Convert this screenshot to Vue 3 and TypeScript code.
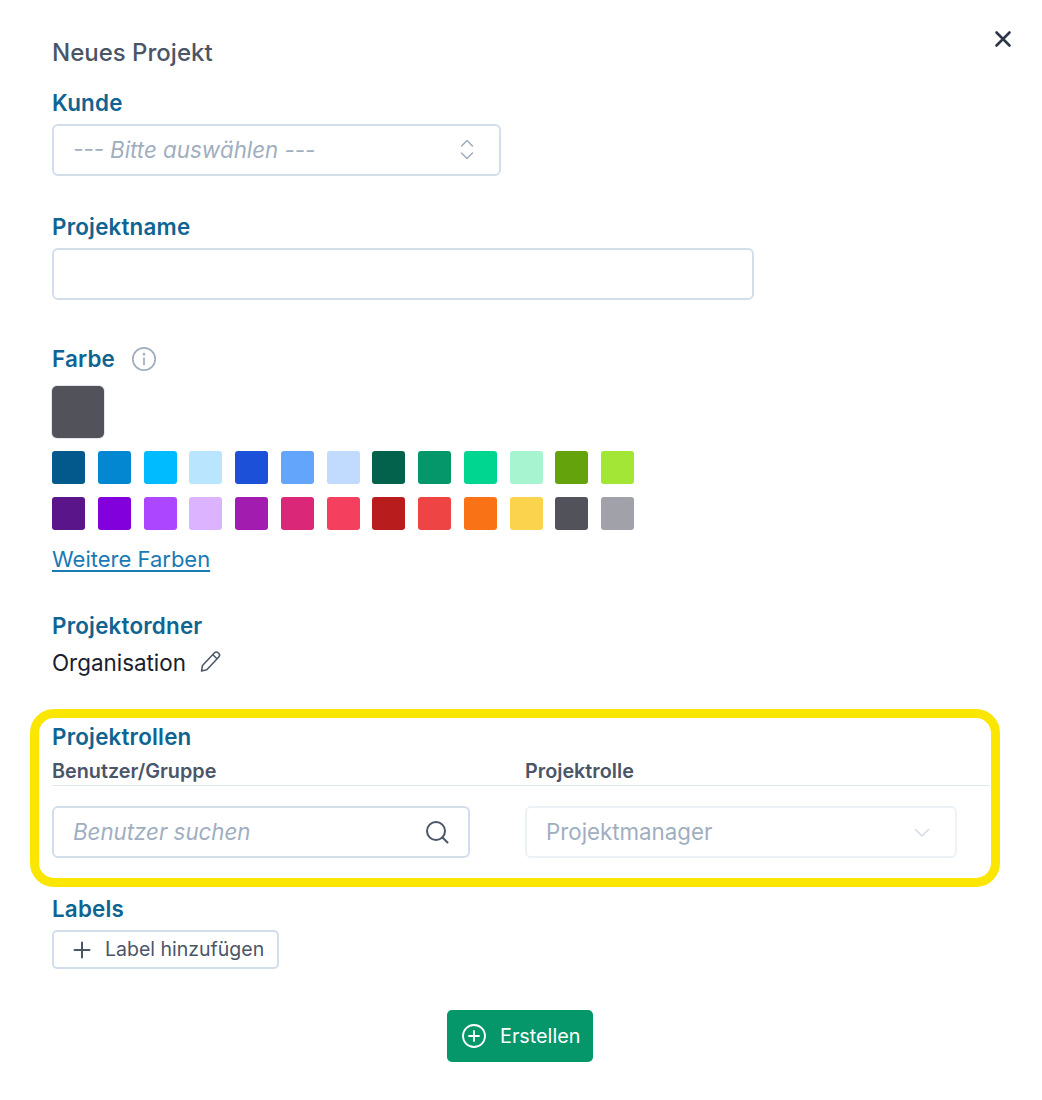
<script setup lang="ts">
const colorRows: string[][] = [
  ['#03598c', '#0387d0', '#00bbff', '#b9e6fe', '#1c50d8', '#62a5fa', '#c0dbfe', '#03624c', '#059669', '#00d690', '#a6f4d0', '#65a30d', '#a3e635'],
  ['#591589', '#8200db', '#ad46ff', '#dcb3ff', '#a21caf', '#db2777', '#f43f5e', '#b91c1c', '#ef4444', '#f97316', '#fcd34d', '#52525b', '#a1a1aa'],
];
</script>

<template>
  <div class="dialog">
    <button class="close" aria-label="Schließen">
      <svg width="18" height="18" viewBox="0 0 18 18" fill="none" stroke="#2d3748" stroke-width="2.6" stroke-linecap="round">
        <path d="M2.500 2.500l13 13M15.500 2.500l-13 13" />
      </svg>
    </button>

    <h1 class="title">Neues Projekt</h1>

    <section class="field kunde">
      <label class="label">Kunde</label>
      <div class="control select">
        <span class="placeholder">--- Bitte auswählen ---</span>
        <svg class="updown" width="14" height="24" viewBox="0 0 14 24" fill="none" stroke="#a0aec0" stroke-width="1.6" stroke-linecap="round" stroke-linejoin="round">
          <path d="M1.500 8L7 2.500 12.500 8M1.500 15L7 20.500 12.500 15" />
        </svg>
      </div>
    </section>

    <section class="field name">
      <label class="label">Projektname</label>
      <div class="control wide"></div>
    </section>

    <section class="field farbe">
      <div class="label-row">
        <label class="label">Farbe</label>
        <svg width="26" height="26" viewBox="0 0 26 26" fill="none" stroke="#a0aec0" stroke-width="1.700">
          <circle cx="13" cy="13" r="11.200" />
          <path d="M13 12v6.500" stroke-linecap="round" />
          <circle cx="13" cy="8.200" r=".6" />
        </svg>
      </div>
      <div class="current"></div>
      <div class="row" v-for="(row, i) in colorRows" :key="i">
        <span v-for="c in row" :key="c" class="swatch" :style="{ background: c }"></span>
      </div>
      <a class="more" href="#">Weitere Farben</a>
    </section>

    <section class="field ordner">
      <label class="label">Projektordner</label>
      <div class="folder">
        <span>Organisation</span>
        <svg width="24" height="24" viewBox="0 0 24 24" fill="none" stroke="#4a5568" stroke-width="1.500" stroke-linejoin="round">
          <path d="M3.500 21l1-5.500L16.500 2.800c1-1 2.500-1 3.500-.1l.8.8c1 1 1 2.400 0 3.400L8.800 19.800z" />
          <path d="M14.800 4.700l4.500 4.300" />
        </svg>
      </div>
    </section>

    <section class="field rollen">
      <label class="label">Projektrollen</label>
      <div class="cols heads">
        <span class="head">Benutzer/Gruppe</span>
        <span class="head">Projektrolle</span>
      </div>
      <div class="cols inputs">
        <div class="control search">
          <span class="placeholder">Benutzer suchen</span>
          <svg width="26" height="26" viewBox="0 0 26 26" fill="none" stroke="#4a5568" stroke-width="2" stroke-linecap="round">
            <circle cx="12" cy="12" r="9" />
            <path d="M18.500 18.500l5 5" />
          </svg>
        </div>
        <div class="control role">
          <span>Projektmanager</span>
          <svg width="18" height="12" viewBox="0 0 18 12" fill="none" stroke="#d5dce6" stroke-width="1.600" stroke-linecap="round" stroke-linejoin="round">
            <path d="M2.500 3.500L9 10l6.500-6.500" />
          </svg>
        </div>
      </div>
      <div class="highlight"></div>
    </section>

    <section class="field labels">
      <label class="label">Labels</label>
      <button class="add">
        <svg width="20" height="20" viewBox="0 0 20 20" fill="none" stroke="#4a5568" stroke-width="2" stroke-linecap="round">
          <path d="M10 2.500v15M2.500 10h15" />
        </svg>
        <span>Label hinzufügen</span>
      </button>
    </section>

    <div class="actions">
      <button class="create">
        <svg width="26" height="26" viewBox="0 0 26 26" fill="none" stroke="#fff" stroke-width="1.800" stroke-linecap="round">
          <circle cx="13" cy="13" r="11" />
          <path d="M13 8v10M8 13h10" />
        </svg>
        <span>Erstellen</span>
      </button>
    </div>
  </div>
</template>

<style>
html, body { background: #fff; }
</style>

<style scoped>
.dialog {
  position: relative;
  box-sizing: border-box;
  width: 1042px;
  height: 1100px;
  padding: 38px 52px 0;
  background: #fff;
  font-family: Inter, "Noto Sans", sans-serif;
  color: #1a202c;
}
.close {
  position: absolute;
  top: 30px;
  right: 30px;
  padding: 0;
  border: 0;
  background: none;
  line-height: 0;
}
.title {
  margin: 0 0 22px;
  font-size: 24px;
  line-height: 30px;
  font-weight: 500;
  color: #4a5568;
}
.label {
  display: block;
  font-size: 22.4px;
  line-height: 26px;
  font-weight: 600;
  letter-spacing: 0.2px;
  color: #0f6491;
}
.control {
  box-sizing: border-box;
  display: flex;
  align-items: center;
  justify-content: space-between;
  height: 52px;
  padding: 0 19px;
  border: 2px solid #d3deeb;
  border-radius: 6px;
  background: #fff;
  font-size: 22.3px;
}
.control span { margin-top: -2px; }
.placeholder {
  font-style: italic;
  color: #a0aec0;
}
.kunde .label { margin-bottom: 8px; }
.select { width: 449px; padding-right: 25px; }
.name { margin-top: 38px; }
.name .label { margin-bottom: 8px; }
.wide { width: 702px; }
.farbe { margin-top: 46px; }
.label-row {
  display: flex;
  align-items: center;
  gap: 16px;
  height: 26px;
}
.current {
  width: 52px;
  height: 52px;
  margin: 14px 0 13px;
  border-radius: 5px;
  background: #52525b;
  box-shadow: 0 0 0 1px #e2e8f0;
}
.row {
  display: flex;
  gap: 12.75px;
  margin-bottom: 13px;
}
.swatch {
  width: 33px;
  height: 33px;
  border-radius: 3px;
}
.more {
  display: inline-block;
  margin-top: 3px;
  font-size: 22px;
  line-height: 26px;
  color: #1a7ab5;
  text-decoration: underline;
  text-underline-offset: 3px;
}
.ordner { margin-top: 41px; }
.folder {
  display: flex;
  align-items: center;
  gap: 12px;
  margin-top: 10px;
  height: 26px;
  font-size: 22.4px;
  color: #1a202c;
}
.rollen {
  position: relative;
  margin-top: 49px;
  margin-right: -52px;
}
.cols {
  display: flex;
  width: 938px;
}
.heads {
  align-items: center;
  height: 23px;
  margin-top: 9px;
  padding-bottom: 3px;
  border-bottom: 1px solid #e2e8f0;
}
.head {
  font-size: 19.800px;
  font-weight: 600;
  color: #4a5568;
}
.head:first-child { width: 473px; }
.inputs {
  gap: 55px;
  margin-top: 20px;
}
.search {
  width: 418px;
  padding-right: 18px;
}
.role {
  width: 432px;
  padding-right: 24px;
  border-color: #edf2f7;
  color: #a0aec0;
}
.highlight {
  position: absolute;
  left: -22px;
  right: 42px;
  top: -15px;
  height: 178px;
  box-sizing: border-box;
  border: 9px solid #fae600;
  border-radius: 24px;
  pointer-events: none;
}
.labels { margin-top: 38px; }
.labels .label { margin-bottom: 8px; }
.add {
  box-sizing: border-box;
  display: flex;
  align-items: center;
  gap: 13px;
  width: 227px;
  height: 39px;
  padding: 0 12px 0 18px;
  border: 2px solid #d3deeb;
  border-radius: 5px;
  background: #fff;
  font-family: inherit;
  font-size: 19.500px;
  color: #4a5568;
  white-space: nowrap;
}
.add span { margin-top: -2px; }
.actions {
  display: flex;
  justify-content: center;
  margin-top: 41px;
  margin-right: 2px;
}
.create {
  display: flex;
  align-items: center;
  gap: 13px;
  box-sizing: border-box;
  width: 146px;
  height: 52px;
  padding: 0 0 0 14px;
  border: 0;
  border-radius: 5px;
  background: #059669;
  font-family: inherit;
  font-size: 19.800px;
  color: #fff;
}
.create svg { flex: none; }
</style>
